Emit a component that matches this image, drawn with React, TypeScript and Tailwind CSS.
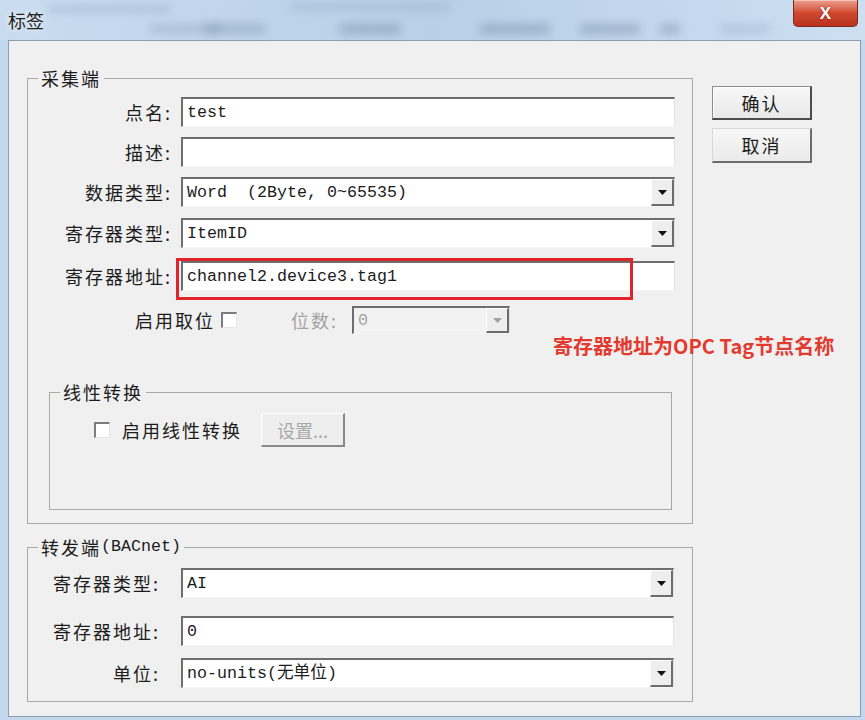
import type { ReactNode } from "react";

// classic win32 look: sunken edit boxes, raised buttons, etched group boxes
const sunken =
  "border-t-2 border-l-2 border-t-[#6e6e6e] border-l-[#6e6e6e] border-b border-r border-b-[#f6f6f6] border-r-[#e2e2e2]";
const cjk = "font-['Noto_Sans_CJK_SC',sans-serif]";
const mono = "font-['Liberation_Mono','Noto_Sans_CJK_SC',monospace]";

const Label = ({ children, width }: { children: ReactNode; width: string }) => (
     <div className={`${width} shrink-0 text-right text-[18px] leading-[22px] tracking-[2px] ${cjk}`}>
          {children}
     </div>
);

const Edit = ({ value, width }: { value?: string; width: string }) => (
     <div className={`${width} h-[30px] flex items-center bg-white pl-[4px] text-[16.67px] ${mono} ${sunken}`}>
          {value}
     </div>
);

const Arrow = ({ color }: { color: string }) => (
     <svg width="9" height="5" viewBox="0 0 9 5">
          <path d="M0 0h9L4.5 5z" fill={color} />
     </svg>
);

const Combo = ({
     value,
     width,
     disabled,
     height = "h-[30px]",
}: {
     value: string;
     width: string;
     disabled?: boolean;
     height?: string;
}) => (
     <div
          className={`${width} ${height} flex ${sunken} ${
               disabled ? "bg-[#f2f2f2]" : "bg-white"
          }`}
     >
          <div
               className={`flex-1 flex items-center pl-[4px] text-[16.67px] whitespace-pre ${mono} ${
                    disabled ? "text-[#a3a3a3]" : ""
               }`}
          >
               {value}
          </div>
          <div className="w-[23px] flex items-center justify-center bg-[#eeeeee] border-t border-l border-t-white border-l-white border-b-2 border-r-2 border-b-[#6c6c6c] border-r-[#6c6c6c]">
               <Arrow color={disabled ? "#a0a0a0" : "#111"} />
          </div>
     </div>
);

const Check = () => (
     <div className="w-[16px] h-[16px] shrink-0 bg-white border-t-2 border-l-2 border-t-[#7c7c7c] border-l-[#7c7c7c] border-b border-r border-b-[#e6e6e6] border-r-[#e6e6e6]" />
);

const Group = ({
     title,
     className,
     children,
}: {
     title: ReactNode;
     className: string;
     children: ReactNode;
}) => (
     <fieldset className={`border border-[#a9a9a9] ${className}`}>
          <legend className={`ml-[10px] px-[3px] h-[22px] text-[18px] leading-[22px] tracking-[2px] ${cjk}`}>
               {title}
          </legend>
          {children}
     </fieldset>
);

export default function App() {
     return (
          <div className={`relative w-[865px] h-[720px] flex flex-col bg-[#c3d8ed] text-[#1c1c1c] overflow-hidden ${cjk}`}>
               {/* title bar, aero glass */}
               <div className="relative h-[40px] shrink-0 flex items-start justify-between bg-gradient-to-r from-[#c9dcef] via-[#b8cfe7] to-[#cddff1]">
                    {/* blurred windows behind the glass */}
                    <div className="absolute left-[50px] top-[6px] w-[120px] h-[6px] bg-[#6f86a6] opacity-30 blur-[4px]" />
                    <div className="absolute left-[150px] top-[24px] w-[70px] h-[10px] bg-[#7c91ad] opacity-30 blur-[5px]" />
                    <div className="absolute left-[205px] top-[24px] w-[60px] h-[10px] bg-[#5f7594] opacity-30 blur-[5px]" />
                    <div className="absolute left-[290px] top-[4px] w-[160px] h-[6px] bg-[#6f86a6] opacity-25 blur-[4px]" />
                    <div className="absolute left-[340px] top-[24px] w-[60px] h-[10px] bg-[#4d6383] opacity-30 blur-[5px]" />
                    <div className="absolute left-[480px] top-[24px] w-[70px] h-[10px] bg-[#4d6383] opacity-30 blur-[5px]" />
                    <div className="absolute left-[580px] top-[24px] w-[60px] h-[10px] bg-[#4d6383] opacity-30 blur-[5px]" />
                    <div className="absolute left-[660px] top-[24px] w-[20px] h-[10px] bg-[#4d6383] opacity-30 blur-[5px]" />
                    <div className="absolute left-[720px] top-[24px] w-[50px] h-[10px] bg-[#7c91ad] opacity-25 blur-[5px]" />
                    <div className="relative pl-[8px] pt-[9px] text-[18px] leading-[22px] text-[#222] [text-shadow:0_0_6px_#fff]">
                         标签
                    </div>
                    <div className="relative mr-[7px] w-[65px] h-[27px] flex items-center justify-center rounded-b-[5px] border border-t-0 border-[#7d2a1f] bg-gradient-to-b from-[#e9a08e] via-[#d0472f] to-[#b8321f] shadow-[inset_0_1px_0_#f5c3b5]">
                         <span className="text-[17px] leading-none font-bold text-white font-['Liberation_Sans',sans-serif] [text-shadow:0_0_2px_#7a2010]">
                              X
                         </span>
                    </div>
               </div>

               {/* client area */}
               <div className="flex-1 ml-[8px] mr-[4px] mb-[3px] flex border border-[#8b9db3] bg-[#f0f0f0]">
                    <div className="pl-[18px] pt-[26px] flex flex-col">
                         <Group title="采集端" className="w-[666px] pb-[13px]">
                              <div className="mt-[8px] flex items-center">
                                   <Label width="w-[144px]">点名:</Label>
                                   <div className="ml-[9px]">
                                        <Edit value="test" width="w-[494px]" />
                                   </div>
                              </div>
                              <div className="mt-[10px] flex items-center">
                                   <Label width="w-[144px]">描述:</Label>
                                   <div className="ml-[9px]">
                                        <Edit width="w-[494px]" />
                                   </div>
                              </div>
                              <div className="mt-[10px] flex items-center">
                                   <Label width="w-[144px]">数据类型:</Label>
                                   <div className="ml-[9px]">
                                        <Combo value="Word  (2Byte, 0~65535)" width="w-[494px]" />
                                   </div>
                              </div>
                              <div className="mt-[11px] flex items-center">
                                   <Label width="w-[144px]">寄存器类型:</Label>
                                   <div className="ml-[9px]">
                                        <Combo value="ItemID" width="w-[494px]" />
                                   </div>
                              </div>
                              <div className="mt-[13px] flex items-center">
                                   <Label width="w-[144px]">寄存器地址:</Label>
                                   <div className="relative ml-[9px]">
                                        <Edit value="channel2.device3.tag1" width="w-[494px]" />
                                        {/* annotation frame */}
                                        <div className="absolute left-[-5px] top-[-3px] w-[457px] h-[42px] border-[3px] border-[#e1242b]" />
                                   </div>
                              </div>
                              <div className="mt-[15px] flex items-center">
                                   <div className="ml-[107px] text-[18px] leading-[22px] tracking-[2px]">启用取位</div>
                                   <div className="ml-[6px]">
                                        <Check />
                                   </div>
                                   <div className="ml-[54px] text-[18px] leading-[22px] tracking-[2px] text-[#a3a3a3]">位数:</div>
                                   <div className="ml-[14px]">
                                        <Combo value="0" width="w-[158px]" height="h-[28px]" disabled />
                                   </div>
                              </div>

                              <Group title="线性转换" className="mt-[47px] ml-[21px] w-[623px] pb-[62px]">
                                   <div className="mt-[10px] flex items-center">
                                        <div className="ml-[44px]">
                                             <Check />
                                        </div>
                                        <div className="ml-[12px] text-[18px] leading-[22px] tracking-[2px]">启用线性转换</div>
                                        <div className="ml-[19px] w-[84px] h-[34px] flex items-center justify-center bg-[#eeeeee] border-t border-l border-t-white border-l-white border-b-2 border-r-2 border-b-[#8a8a8a] border-r-[#8a8a8a] text-[18px] leading-[22px] text-[#a8a8a8]">
                                             设置...
                                        </div>
                                   </div>
                              </Group>
                         </Group>

                         <Group
                              title={
                                   <>
                                        转发端<span className={`tracking-normal text-[16.67px] leading-[22px] align-top ${mono}`}>(BACnet)</span>
                                   </>
                              }
                              className="mt-[12px] w-[666px] pb-[13px]"
                         >
                              <div className="mt-[10px] flex items-center">
                                   <Label width="w-[132px]">寄存器类型:</Label>
                                   <div className="ml-[21px]">
                                        <Combo value="AI" width="w-[493px]" />
                                   </div>
                              </div>
                              <div className="mt-[18px] flex items-center">
                                   <Label width="w-[132px]">寄存器地址:</Label>
                                   <div className="ml-[21px]">
                                        <Edit value="0" width="w-[493px]" />
                                   </div>
                              </div>
                              <div className="mt-[12px] flex items-center">
                                   <Label width="w-[132px]">单位:</Label>
                                   <div className="ml-[21px]">
                                        <Combo value="no-units(无单位)" width="w-[493px]" />
                                   </div>
                              </div>
                         </Group>
                    </div>

                    {/* dialog buttons */}
                    <div className="ml-[19px] pt-[45px] flex flex-col">
                         <div className="w-[100px] h-[34px] flex items-center justify-center bg-gradient-to-b from-[#f7f7f7] to-[#e9e9e9] border-t border-l border-t-[#8c8c8c] border-l-[#8c8c8c] border-b-2 border-r-2 border-b-[#4c4c4c] border-r-[#4c4c4c] shadow-[inset_1px_1px_0_#fff] text-[18px] leading-[22px] tracking-[2px]">
                              确认
                         </div>
                         <div className="mt-[8px] w-[100px] h-[35px] flex items-center justify-center bg-gradient-to-b from-[#f7f7f7] to-[#ebebeb] border-t border-l border-t-[#d8d8d8] border-l-[#d8d8d8] border-b-2 border-r-2 border-b-[#6c6c6c] border-r-[#6c6c6c] text-[18px] leading-[22px] tracking-[2px]">
                              取消
                         </div>
                    </div>
               </div>

               {/* red annotation note */}
               <div className="absolute left-[553px] top-[333px] text-[20px] leading-[25px] font-bold text-[#e4392f] whitespace-nowrap">
                    寄存器地址为OPC Tag节点名称
               </div>
          </div>
     );
}
